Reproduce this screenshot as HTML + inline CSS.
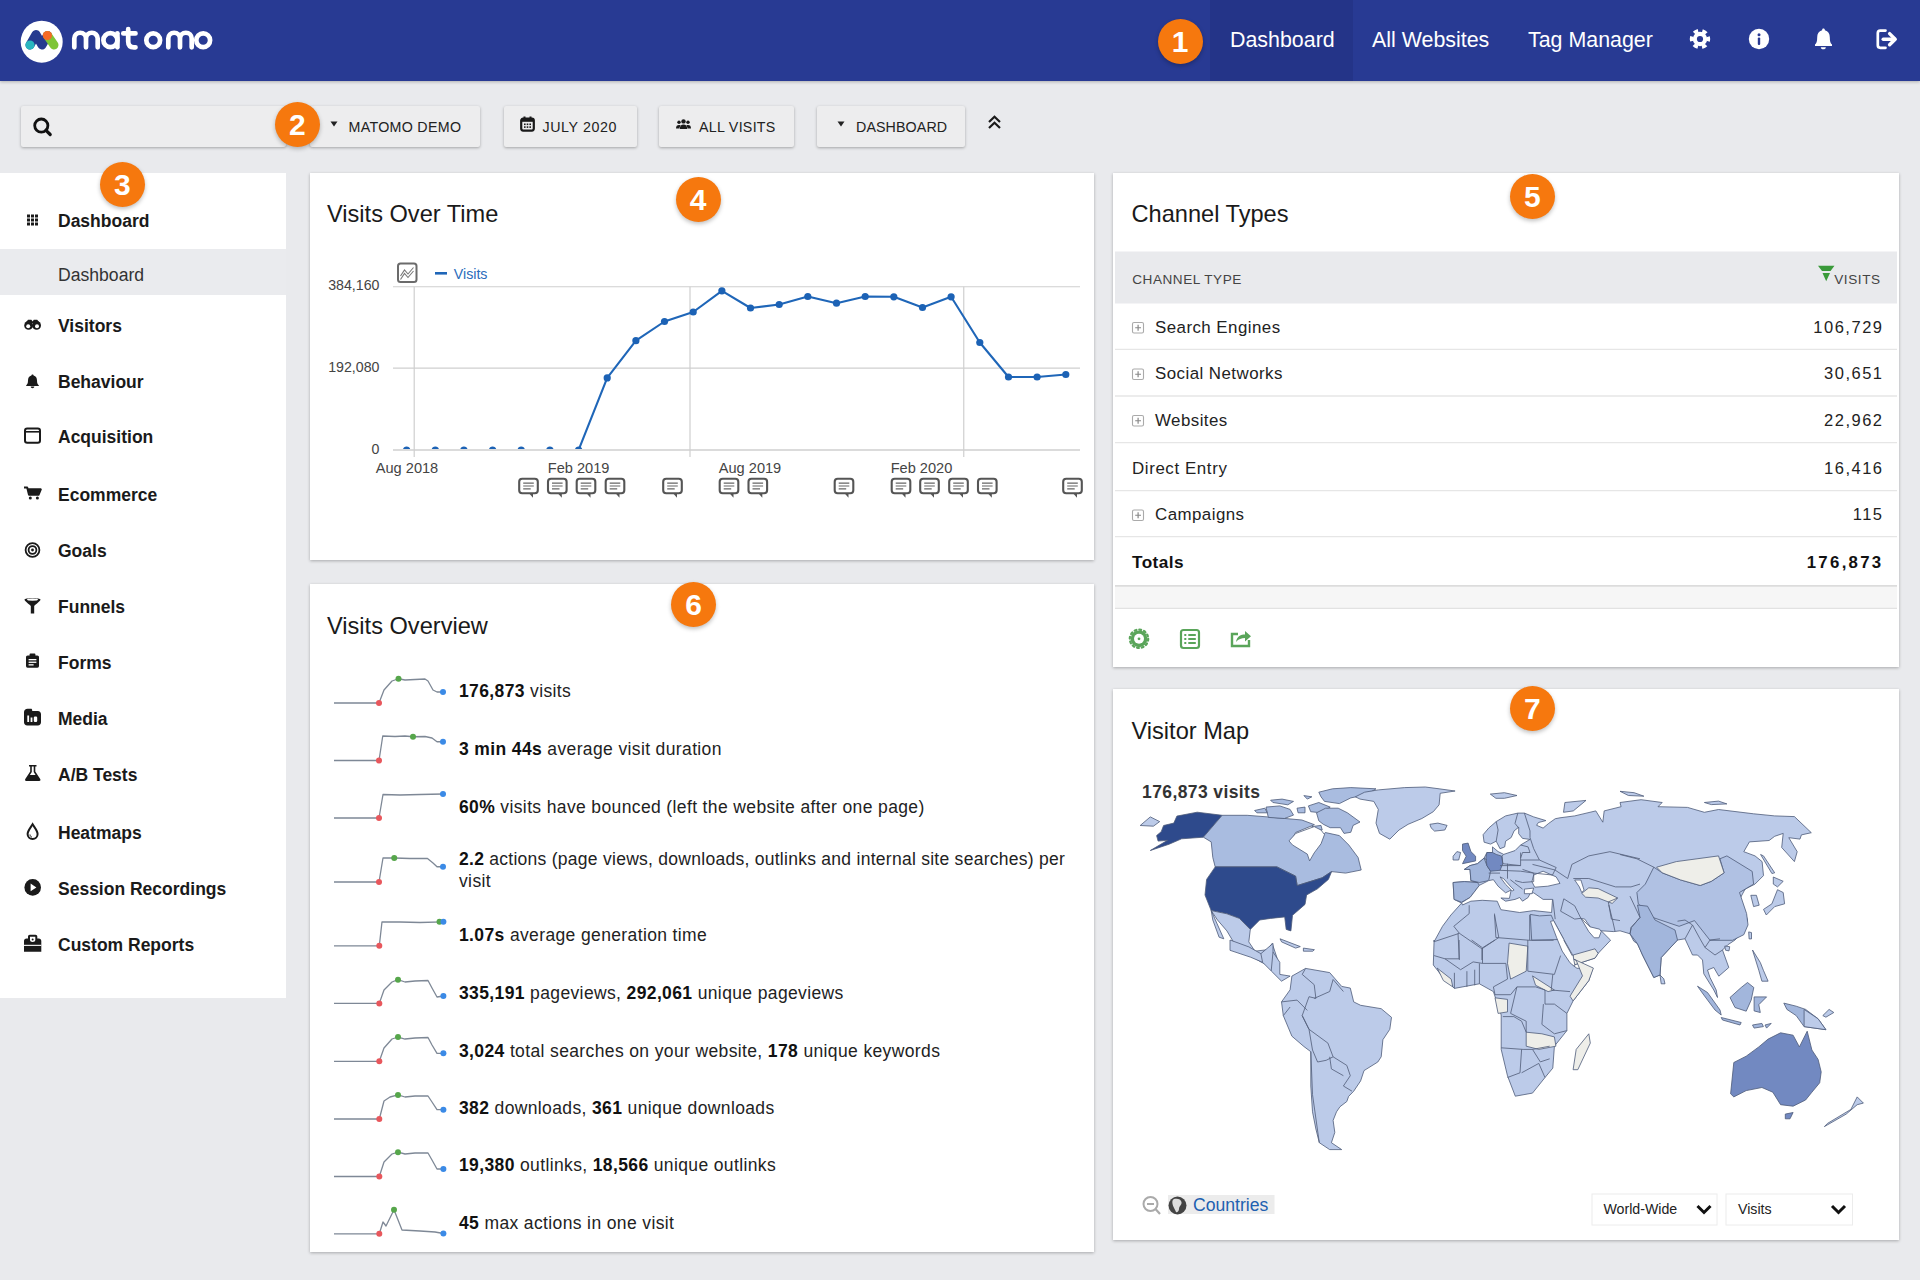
<!DOCTYPE html>
<html><head><meta charset="utf-8">
<style>
*{margin:0;padding:0;box-sizing:border-box}
html,body{width:1920px;height:1280px;overflow:hidden}
body{background:#e9eaed;font-family:"Liberation Sans",sans-serif;color:#222;position:relative}
.abs{position:absolute}
#hdr{position:absolute;left:0;top:0;width:1920px;height:81px;background:#283a93;box-shadow:0 1px 3px rgba(0,0,0,.25)}
.nav{position:absolute;top:0;height:81px;color:#fff;font-size:21px;line-height:81px;white-space:nowrap}
.badge{position:absolute;width:45px;height:45px;border-radius:50%;background:#f6780e;color:#fff;font-weight:bold;font-size:30px;line-height:46px;text-align:center;box-shadow:0 2px 4px rgba(0,0,0,.25)}
.tb{font-size:14.25px;letter-spacing:.6px}
.btn{position:absolute;top:106px;height:41px;background:#ededee;box-shadow:0 1px 3px rgba(0,0,0,.3);border-radius:2px;font-size:15px;letter-spacing:.6px;color:#222;line-height:41px;white-space:nowrap}
#side{position:absolute;left:0;top:173px;width:286px;height:825px;background:#fff}
.si{position:absolute;left:58px;font-size:17.5px;line-height:20px;font-weight:bold;color:#1a1a1a;white-space:nowrap}
.sic{position:absolute;left:24px;width:18px;height:18px}
.wd{position:absolute;background:#fff;box-shadow:0 1px 3px rgba(0,0,0,.28)}
.wt{position:absolute;left:17px;font-size:23px;color:#1a1a1a;white-space:nowrap}
</style></head><body>

<!-- HEADER -->
<div id="hdr">
  <svg class="abs" style="left:0;top:0" width="240" height="81" viewBox="0 0 240 81">
    <circle cx="41.7" cy="41.7" r="21" fill="#fff"/>
    <path d="M30 45 L36 34.5 L42 45 L47.5 35.5" fill="none" stroke="#253a8f" stroke-width="9" stroke-linecap="round" stroke-linejoin="round"/>
    <path d="M47.5 35.5 L54 45" fill="none" stroke="#7dc536" stroke-width="9" stroke-linecap="round"/>
    <circle cx="30" cy="45" r="4.6" fill="#2ab6bf"/>
    <circle cx="47.4" cy="35.6" r="4.6" fill="#f56a25"/>
    <g fill="none" stroke="#fff" stroke-width="4.7" stroke-linecap="round" stroke-linejoin="round">
      <path d="M74.3 47.3 V38.6 A5.85 5.85 0 0 1 86 38.6 V47.3 M86 38.6 A5.85 5.85 0 0 1 97.7 38.6 V47.3"/>
      <circle cx="110.4" cy="40.2" r="7"/><path d="M117.4 33.3 V47.3"/>
      <path d="M128.2 29.2 V41.5 C128.2 45.5 130 47.3 134 47.3 H135.5 M123.3 33.4 H135.5"/>
      <circle cx="153.2" cy="40.2" r="6.9"/>
      <path d="M168.3 47.3 V38.6 A5.85 5.85 0 0 1 180 38.6 V47.3 M180 38.6 A5.85 5.85 0 0 1 191.7 38.6 V47.3"/>
      <circle cx="203.2" cy="40.2" r="6.9"/>
    </g>
  </svg>
  <div class="nav" style="left:1210px;width:143px;background:#243488"></div>
  <div class="nav" style="left:1230px;font-size:21.4px">Dashboard</div>
  <div class="nav" style="left:1372px;font-size:21.4px">All Websites</div>
  <div class="nav" style="left:1528px;font-size:21.4px">Tag Manager</div>
  <!-- gear -->
  <svg class="abs" style="left:1689px;top:28px" width="22" height="22" viewBox="-11 -11 22 22">
    <circle r="8.4" fill="none" stroke="#fff" stroke-width="3.6" stroke-dasharray="4.6 4.2" transform="rotate(-16)"/>
    <circle r="7.2" fill="#fff"/>
    <circle r="3.1" fill="#293992"/>
  </svg>
  <!-- info -->
  <svg class="abs" style="left:1748px;top:28px" width="22" height="22" viewBox="-11 -11 22 22">
    <circle r="10.2" fill="#fff"/>
    <circle cx="0" cy="-4.3" r="1.5" fill="#293992"/>
    <rect x="-1.2" y="-1.5" width="2.4" height="7.6" rx="1" fill="#293992"/>
  </svg>
  <!-- bell -->
  <svg class="abs" style="left:1814px;top:27.5px" width="20" height="23" viewBox="0 0 20 23">
    <path d="M9.3 0.6 C10.4 0.6 10.9 1.3 10.9 2.2 C14.2 3 15.8 5.6 15.8 9.2 C15.8 13.4 16.5 15.3 18 16.6 V18 H1 V16.6 C2.5 15.3 3.2 13.4 3.2 9.2 C3.2 5.6 4.8 3 8.1 2.2 C8.1 1.3 8.6 0.6 9.3 0.6 Z" fill="#fff"/>
    <path d="M6.8 19.2 H11.8 C11.8 20.6 10.8 21.3 9.3 21.3 C7.8 21.3 6.8 20.6 6.8 19.2 Z" fill="#fff"/>
  </svg>
  <!-- logout -->
  <svg class="abs" style="left:1870px;top:24px" width="34" height="32" viewBox="1870 24 34 32">
    <path d="M1885.5 30.6 H1880.3 Q1877.8 30.6 1877.8 33.1 V45.3 Q1877.8 47.8 1880.3 47.8 H1885.5" fill="none" stroke="#fff" stroke-width="2.7" stroke-linecap="round"/>
    <path d="M1883.2 39.2 H1894.6" stroke="#fff" stroke-width="3.4" stroke-linecap="round"/>
    <path d="M1889.6 33.6 L1895.2 39.2 L1889.6 44.8" fill="none" stroke="#fff" stroke-width="3.4" stroke-linecap="round" stroke-linejoin="round"/>
  </svg>
</div>
<div class="badge" style="left:1157.5px;top:18.5px">1</div>

<!-- TOOLBAR -->
<div class="btn" style="left:21px;width:265px">
  <svg class="abs" style="left:11px;top:10px" width="22" height="22" viewBox="0 0 22 22">
    <circle cx="9.3" cy="9.6" r="6.6" fill="none" stroke="#111" stroke-width="2.8"/>
    <path d="M14 14.3 L18.2 18.5" stroke="#111" stroke-width="3.2" stroke-linecap="round"/>
  </svg>
</div>
<div class="btn" style="left:310px;width:170px">
  <svg class="abs" style="left:20px;top:15px" width="8" height="6" viewBox="0 0 8 6"><path d="M0.5 0.5 H7.5 L4 5.5 Z" fill="#222"/></svg>
  <span class="abs tb" style="left:38.5px;letter-spacing:.3px;top:.5px">MATOMO DEMO</span>
</div>
<div class="btn" style="left:504px;width:133px">
  <svg class="abs" style="left:16px;top:10px" width="15" height="16" viewBox="0 0 15 16">
    <rect x="1.2" y="2.6" width="12.6" height="12" rx="2" fill="none" stroke="#1a1a1a" stroke-width="2.2"/>
    <rect x="1.2" y="2.6" width="12.6" height="3.2" fill="#1a1a1a"/>
    <rect x="3.5" y="0.5" width="2" height="3" fill="#1a1a1a"/><rect x="9.5" y="0.5" width="2" height="3" fill="#1a1a1a"/>
    <g fill="#1a1a1a"><rect x="4" y="7.5" width="1.6" height="1.6"/><rect x="6.7" y="7.5" width="1.6" height="1.6"/><rect x="9.4" y="7.5" width="1.6" height="1.6"/><rect x="4" y="10.3" width="1.6" height="1.6"/><rect x="6.7" y="10.3" width="1.6" height="1.6"/><rect x="9.4" y="10.3" width="1.6" height="1.6"/></g>
  </svg>
  <span class="abs tb" style="left:38.5px;top:.5px">JULY 2020</span>
</div>
<div class="btn" style="left:659px;width:135px">
  <svg class="abs" style="left:17px;top:13px" width="15" height="11" viewBox="0 0 15 11">
    <g fill="#1a1a1a"><circle cx="7.5" cy="2.4" r="2.2"/><circle cx="3" cy="3.3" r="1.7"/><circle cx="12" cy="3.3" r="1.7"/>
    <path d="M3.8 10 C3.8 6.8 5.2 5.4 7.5 5.4 C9.8 5.4 11.2 6.8 11.2 10 Z"/><path d="M0 9.5 C0 6.8 1 5.9 3 5.9 C4 5.9 4.5 6.2 4.8 6.5 C3.9 7.3 3.5 8.4 3.5 9.5 Z"/><path d="M15 9.5 C15 6.8 14 5.9 12 5.9 C11 5.9 10.5 6.2 10.2 6.5 C11.1 7.3 11.5 8.4 11.5 9.5 Z"/></g>
  </svg>
  <span class="abs tb" style="left:40px;letter-spacing:.27px;top:.5px">ALL VISITS</span>
</div>
<div class="btn" style="left:817px;width:148px">
  <svg class="abs" style="left:20px;top:15px" width="8" height="6" viewBox="0 0 8 6"><path d="M0.5 0.5 H7.5 L4 5.5 Z" fill="#222"/></svg>
  <span class="abs tb" style="left:39px;letter-spacing:.1px;top:.5px">DASHBOARD</span>
</div>
<svg class="abs" style="left:987px;top:115px" width="15" height="15" viewBox="0 0 15 15">
  <path d="M2 7 L7.5 1.8 L13 7 M2 13 L7.5 7.8 L13 13" fill="none" stroke="#1a1a1a" stroke-width="2.2"/>
</svg>
<div class="badge" style="left:274.75px;top:101.5px">2</div>

<!-- SIDEBAR -->
<div id="side">
  <div class="abs" style="left:0;top:76px;width:286px;height:46px;background:#eaebee"></div>
  <div class="si" style="top:38px">Dashboard</div>
  <div class="si" style="top:91.5px;font-weight:normal;font-size:17.6px;color:#333">Dashboard</div>
  <div class="si" style="top:142.75px">Visitors</div>
  <div class="si" style="top:198.5px">Behaviour</div>
  <div class="si" style="top:254.25px">Acquisition</div>
  <div class="si" style="top:312.25px">Ecommerce</div>
  <div class="si" style="top:368px">Goals</div>
  <div class="si" style="top:424px">Funnels</div>
  <div class="si" style="top:479.75px">Forms</div>
  <div class="si" style="top:535.5px">Media</div>
  <div class="si" style="top:591.5px">A/B Tests</div>
  <div class="si" style="top:649.5px">Heatmaps</div>
  <div class="si" style="top:705.7px">Session Recordings</div>
  <div class="si" style="top:762px">Custom Reports</div>
  <svg class="abs" style="left:0;top:0" width="286" height="825" viewBox="0 173 286 825">
   <g fill="#1a1a1a" stroke="none">
    <rect x="27" y="214.5" width="3" height="3"/><rect x="27" y="218.5" width="3" height="3"/><rect x="27" y="222.5" width="3" height="3"/><rect x="31" y="214.5" width="3" height="3"/><rect x="31" y="218.5" width="3" height="3"/><rect x="31" y="222.5" width="3" height="3"/><rect x="35" y="214.5" width="3" height="3"/><rect x="35" y="218.5" width="3" height="3"/><rect x="35" y="222.5" width="3" height="3"/>
    <!-- binoculars -->
    <circle cx="28.6" cy="325.4" r="4.4"/>
    <circle cx="36.6" cy="325.4" r="4.4"/>
    <path d="M25.5 323 L28 319.8 H31.4 L32.6 321.5 L33.8 319.8 H37.2 L39.7 323 Z"/>
    <circle cx="28.2" cy="326.2" r="2" fill="#fff"/>
    <circle cx="37" cy="326.2" r="2" fill="#fff"/>
    <!-- bell -->
    <path d="M32.5 374.5 C33.2 374.5 33.6 375 33.6 375.6 C36 376.2 37 378 37 380.5 C37 383.2 37.6 384.4 38.8 385.3 V386 H26.2 V385.3 C27.4 384.4 28 383.2 28 380.5 C28 378 29 376.2 31.4 375.6 C31.4 375 31.8 374.5 32.5 374.5 Z"/>
    <path d="M30.7 386.6 H34.3 C34.3 387.6 33.5 388.2 32.5 388.2 C31.5 388.2 30.7 387.6 30.7 386.6 Z"/>
    <!-- window -->
    <rect x="25" y="428.5" width="15" height="14.2" rx="2.2" fill="none" stroke="#1a1a1a" stroke-width="2"/>
    <rect x="25" y="431" width="15" height="1.6"/>
    <!-- cart -->
    <path d="M24 487.5 H27.2 L29 494.8 H38.5 L40.8 489.3 H28.2" fill="none" stroke="#1a1a1a" stroke-width="2" stroke-linejoin="round"/>
    <path d="M28.4 489.6 H40.2 L38.2 494.4 H29.4 Z"/>
    <circle cx="30.3" cy="498" r="1.5"/><circle cx="37.4" cy="498" r="1.5"/>
    <!-- target -->
    <circle cx="32.5" cy="550" r="6.9" fill="none" stroke="#1a1a1a" stroke-width="1.8"/>
    <circle cx="32.5" cy="550" r="3.9" fill="none" stroke="#1a1a1a" stroke-width="1.8"/>
    <circle cx="32.5" cy="550" r="1.4"/>
    <!-- funnel -->
    <path d="M24.5 599.5 C24.5 597.8 40.5 597.8 40.5 599.5 C40.5 601 35.5 604.5 34.2 606 V613.5 H30.8 V606 C29.5 604.5 24.5 601 24.5 599.5 Z"/>
    <ellipse cx="32.5" cy="599.6" rx="5.6" ry="1.2" fill="#fff"/>
    <!-- clipboard -->
    <rect x="26" y="655.5" width="13" height="12.2" rx="1.6"/>
    <rect x="29.6" y="653.6" width="5.8" height="3.4" rx="0.8"/>
    <g fill="#fff"><rect x="28.6" y="659" width="7.8" height="1.3"/><rect x="28.6" y="661.6" width="7.8" height="1.3"/><rect x="28.6" y="664.2" width="5" height="1.3"/></g>
    <!-- media -->
    <path d="M27.5 708.8 H31 C31.8 708.8 32.2 709.5 32.2 710.3 V711 H37.8 C39.8 711 41 712.3 41 714.2 V722.3 C41 724.2 39.8 725.5 37.8 725.5 H27.3 C25.3 725.5 24 724.2 24 722.3 V712 C24 710.2 25.5 708.8 27.5 708.8 Z"/>
    <g fill="#fff"><rect x="27.3" y="715.5" width="1.8" height="6.5"/><rect x="30.6" y="717.5" width="1.8" height="4.5"/><rect x="33.8" y="716.5" width="3.4" height="5.5" rx="1.2"/></g>
    <!-- flask -->
    <path d="M29 765 H36.5 V766.6 H35.3 V771.5 L40.2 779 C40.8 780 40.3 781 39.2 781 H26.3 C25.2 781 24.7 780 25.3 779 L30.2 771.5 V766.6 H29 Z"/>
    <path d="M31.8 766.6 H33.7 V772 L35.6 775 H29.9 L31.8 772 Z" fill="#fff"/>
    <!-- drop -->
    <path d="M32.6 824.3 C34.5 827.5 37.6 831 37.6 834 C37.6 837 35.4 839 32.6 839 C29.8 839 27.6 837 27.6 834 C27.6 831 30.7 827.5 32.6 824.3 Z" fill="none" stroke="#1a1a1a" stroke-width="2"/>
    <path d="M30 834.5 C30 836 31 837 32 837" fill="none" stroke="#1a1a1a" stroke-width="1"/>
    <!-- play -->
    <circle cx="32.7" cy="887.4" r="8.3"/>
    <path d="M30.6 883.6 L36.4 887.4 L30.6 891.2 Z" fill="#fff"/>
    <!-- custom reports -->
    <path d="M24 941 C24 939.5 25 938.6 26.5 938.6 H28 V936.5 C28 935.4 28.8 934.7 29.8 934.7 H35.5 C36.5 934.7 37.3 935.4 37.3 936.5 V938.6 H38.8 C40.3 938.6 41.3 939.5 41.3 941 V951.7 H24 Z"/>
    <g fill="#fff"><path d="M30 936.8 H35.3 V939.8 C35.3 941.2 34.2 942 32.65 942 C31.1 942 30 941.2 30 939.8 Z"/><rect x="24" y="944.8" width="17.3" height="1.1"/></g>
    <circle cx="32.65" cy="939.4" r="1" fill="#1a1a1a"/>
   </g>
  </svg>
</div>
<div class="badge" style="left:99.75px;top:162px">3</div>

<!-- WIDGETS -->
<div class="wd" style="left:310px;top:173px;width:784px;height:387px"></div>
<div class="wd" style="left:310px;top:584px;width:784px;height:668px"></div>
<div class="wd" style="left:1113px;top:173px;width:786px;height:494px"></div>
<div class="wd" style="left:1113px;top:689px;width:786px;height:551px"></div>
<svg class="abs" style="left:0;top:0" width="1920" height="1280" viewBox="0 0 1920 1280" font-family="Liberation Sans">
<text x="327" y="222.3" font-size="23.6" fill="#1a1a1a" font-weight="normal" text-anchor="start">Visits Over Time</text>
<text x="327" y="633.5" font-size="23.6" fill="#1a1a1a" font-weight="normal" text-anchor="start">Visits Overview</text>
<text x="1131.5" y="222.3" font-size="23.6" fill="#1a1a1a" font-weight="normal" text-anchor="start">Channel Types</text>
<text x="1131.5" y="739" font-size="23.6" fill="#1a1a1a" font-weight="normal" text-anchor="start">Visitor Map</text>
<line x1="393" y1="286.75" x2="1080" y2="286.75" stroke="#cfcfcf" stroke-width="1.2"/>
<line x1="393" y1="368.2" x2="1080" y2="368.2" stroke="#cfcfcf" stroke-width="1.2"/>
<line x1="393" y1="450" x2="1080" y2="450" stroke="#cfcfcf" stroke-width="1.2"/>
<line x1="414.2" y1="286.75" x2="414.2" y2="457" stroke="#cfcfcf" stroke-width="1.2"/>
<line x1="690" y1="286.75" x2="690" y2="457" stroke="#cfcfcf" stroke-width="1.2"/>
<line x1="963.75" y1="286.75" x2="963.75" y2="457" stroke="#cfcfcf" stroke-width="1.2"/>
<text x="379.5" y="289.7" font-size="14.2" fill="#444" font-weight="normal" text-anchor="end">384,160</text>
<text x="379.5" y="371.7" font-size="14.2" fill="#444" font-weight="normal" text-anchor="end">192,080</text>
<text x="379.5" y="454.2" font-size="14.2" fill="#444" font-weight="normal" text-anchor="end">0</text>
<text x="407" y="472.8" font-size="14.6" fill="#444" font-weight="normal" text-anchor="middle">Aug 2018</text>
<text x="578.6" y="472.8" font-size="14.6" fill="#444" font-weight="normal" text-anchor="middle">Feb 2019</text>
<text x="750" y="472.8" font-size="14.6" fill="#444" font-weight="normal" text-anchor="middle">Aug 2019</text>
<text x="921.5" y="472.8" font-size="14.6" fill="#444" font-weight="normal" text-anchor="middle">Feb 2020</text>
<clipPath id="plotclip"><rect x="393" y="250" width="700" height="199"/></clipPath>
<g clip-path="url(#plotclip)">
<polyline points="406.6,450.0 435.3,450.0 463.9,450.0 492.6,450.0 521.2,450.0 549.9,450.0 578.6,450.0 607.2,377.9 635.9,340.7 664.5,321.5 693.2,312.0 721.9,290.8 750.5,308.0 779.2,304.5 807.8,296.5 836.5,303.2 865.2,296.5 893.8,296.8 922.5,307.5 951.1,296.8 979.8,342.5 1008.5,377.0 1037.1,377.0 1065.8,374.5" fill="none" stroke="#1f66b8" stroke-width="2.1" stroke-linejoin="round"/>
<circle cx="406.6" cy="450.0" r="3.6" fill="#1c62b5"/>
<circle cx="435.3" cy="450.0" r="3.6" fill="#1c62b5"/>
<circle cx="463.9" cy="450.0" r="3.6" fill="#1c62b5"/>
<circle cx="492.6" cy="450.0" r="3.6" fill="#1c62b5"/>
<circle cx="521.2" cy="450.0" r="3.6" fill="#1c62b5"/>
<circle cx="549.9" cy="450.0" r="3.6" fill="#1c62b5"/>
<circle cx="578.6" cy="450.0" r="3.6" fill="#1c62b5"/>
<circle cx="607.2" cy="377.9" r="3.6" fill="#1c62b5"/>
<circle cx="635.9" cy="340.7" r="3.6" fill="#1c62b5"/>
<circle cx="664.5" cy="321.5" r="3.6" fill="#1c62b5"/>
<circle cx="693.2" cy="312.0" r="3.6" fill="#1c62b5"/>
<circle cx="721.9" cy="290.8" r="3.6" fill="#1c62b5"/>
<circle cx="750.5" cy="308.0" r="3.6" fill="#1c62b5"/>
<circle cx="779.2" cy="304.5" r="3.6" fill="#1c62b5"/>
<circle cx="807.8" cy="296.5" r="3.6" fill="#1c62b5"/>
<circle cx="836.5" cy="303.2" r="3.6" fill="#1c62b5"/>
<circle cx="865.2" cy="296.5" r="3.6" fill="#1c62b5"/>
<circle cx="893.8" cy="296.8" r="3.6" fill="#1c62b5"/>
<circle cx="922.5" cy="307.5" r="3.6" fill="#1c62b5"/>
<circle cx="951.1" cy="296.8" r="3.6" fill="#1c62b5"/>
<circle cx="979.8" cy="342.5" r="3.6" fill="#1c62b5"/>
<circle cx="1008.5" cy="377.0" r="3.6" fill="#1c62b5"/>
<circle cx="1037.1" cy="377.0" r="3.6" fill="#1c62b5"/>
<circle cx="1065.8" cy="374.5" r="3.6" fill="#1c62b5"/>
</g>
<line x1="393" y1="450" x2="1080" y2="450" stroke="#cfcfcf" stroke-width="1.2"/>
<rect x="398" y="263.4" width="18.5" height="18.5" rx="2.5" fill="none" stroke="#6b6b6b" stroke-width="2"/>
<path d="M400.5 276 L404.5 270 L408 274 L413.5 267.5 M400.5 279.5 L404.5 273.5 L408 277.5 L413.5 271" fill="none" stroke="#777" stroke-width="1.1"/>
<line x1="435" y1="273.3" x2="447" y2="273.3" stroke="#1f66b8" stroke-width="2.6"/>
<text x="453.8" y="279.2" font-size="14.2" fill="#2a6cbb" font-weight="normal" text-anchor="start">Visits</text>
<rect x="519.2" y="478.8" width="18.6" height="14.4" rx="3" fill="#fff" stroke="#555" stroke-width="2.1"/>
<path d="M529.0 493.2 L533.0 497.8 L533.0 493.2 Z" fill="#555"/>
<path d="M523.2 483.1 H533.8 M523.2 486.0 H533.8 M523.2 488.90000000000003 H530.7" stroke="#666" stroke-width="1.2"/>
<rect x="548.0" y="478.8" width="18.6" height="14.4" rx="3" fill="#fff" stroke="#555" stroke-width="2.1"/>
<path d="M557.8 493.2 L561.8 497.8 L561.8 493.2 Z" fill="#555"/>
<path d="M552.0 483.1 H562.6 M552.0 486.0 H562.6 M552.0 488.90000000000003 H559.5" stroke="#666" stroke-width="1.2"/>
<rect x="576.7" y="478.8" width="18.6" height="14.4" rx="3" fill="#fff" stroke="#555" stroke-width="2.1"/>
<path d="M586.5 493.2 L590.5 497.8 L590.5 493.2 Z" fill="#555"/>
<path d="M580.7 483.1 H591.3 M580.7 486.0 H591.3 M580.7 488.90000000000003 H588.2" stroke="#666" stroke-width="1.2"/>
<rect x="605.7" y="478.8" width="18.6" height="14.4" rx="3" fill="#fff" stroke="#555" stroke-width="2.1"/>
<path d="M615.5 493.2 L619.5 497.8 L619.5 493.2 Z" fill="#555"/>
<path d="M609.7 483.1 H620.3 M609.7 486.0 H620.3 M609.7 488.90000000000003 H617.2" stroke="#666" stroke-width="1.2"/>
<rect x="663.2" y="478.8" width="18.6" height="14.4" rx="3" fill="#fff" stroke="#555" stroke-width="2.1"/>
<path d="M673.0 493.2 L677.0 497.8 L677.0 493.2 Z" fill="#555"/>
<path d="M667.2 483.1 H677.8 M667.2 486.0 H677.8 M667.2 488.90000000000003 H674.7" stroke="#666" stroke-width="1.2"/>
<rect x="719.7" y="478.8" width="18.6" height="14.4" rx="3" fill="#fff" stroke="#555" stroke-width="2.1"/>
<path d="M729.5 493.2 L733.5 497.8 L733.5 493.2 Z" fill="#555"/>
<path d="M723.7 483.1 H734.3 M723.7 486.0 H734.3 M723.7 488.90000000000003 H731.2" stroke="#666" stroke-width="1.2"/>
<rect x="748.5" y="478.8" width="18.6" height="14.4" rx="3" fill="#fff" stroke="#555" stroke-width="2.1"/>
<path d="M758.3 493.2 L762.3 497.8 L762.3 493.2 Z" fill="#555"/>
<path d="M752.5 483.1 H763.1 M752.5 486.0 H763.1 M752.5 488.90000000000003 H760.0" stroke="#666" stroke-width="1.2"/>
<rect x="834.7" y="478.8" width="18.6" height="14.4" rx="3" fill="#fff" stroke="#555" stroke-width="2.1"/>
<path d="M844.5 493.2 L848.5 497.8 L848.5 493.2 Z" fill="#555"/>
<path d="M838.7 483.1 H849.3 M838.7 486.0 H849.3 M838.7 488.90000000000003 H846.2" stroke="#666" stroke-width="1.2"/>
<rect x="891.7" y="478.8" width="18.6" height="14.4" rx="3" fill="#fff" stroke="#555" stroke-width="2.1"/>
<path d="M901.5 493.2 L905.5 497.8 L905.5 493.2 Z" fill="#555"/>
<path d="M895.7 483.1 H906.3 M895.7 486.0 H906.3 M895.7 488.90000000000003 H903.2" stroke="#666" stroke-width="1.2"/>
<rect x="920.2" y="478.8" width="18.6" height="14.4" rx="3" fill="#fff" stroke="#555" stroke-width="2.1"/>
<path d="M930.0 493.2 L934.0 497.8 L934.0 493.2 Z" fill="#555"/>
<path d="M924.2 483.1 H934.8 M924.2 486.0 H934.8 M924.2 488.90000000000003 H931.7" stroke="#666" stroke-width="1.2"/>
<rect x="949.2" y="478.8" width="18.6" height="14.4" rx="3" fill="#fff" stroke="#555" stroke-width="2.1"/>
<path d="M959.0 493.2 L963.0 497.8 L963.0 493.2 Z" fill="#555"/>
<path d="M953.2 483.1 H963.8 M953.2 486.0 H963.8 M953.2 488.90000000000003 H960.7" stroke="#666" stroke-width="1.2"/>
<rect x="978.0" y="478.8" width="18.6" height="14.4" rx="3" fill="#fff" stroke="#555" stroke-width="2.1"/>
<path d="M987.8 493.2 L991.8 497.8 L991.8 493.2 Z" fill="#555"/>
<path d="M982.0 483.1 H992.6 M982.0 486.0 H992.6 M982.0 488.90000000000003 H989.5" stroke="#666" stroke-width="1.2"/>
<rect x="1063.2" y="478.8" width="18.6" height="14.4" rx="3" fill="#fff" stroke="#555" stroke-width="2.1"/>
<path d="M1073.0 493.2 L1077.0 497.8 L1077.0 493.2 Z" fill="#555"/>
<path d="M1067.2 483.1 H1077.8 M1067.2 486.0 H1077.8 M1067.2 488.90000000000003 H1074.7" stroke="#666" stroke-width="1.2"/>
<text x="459" y="697" font-size="17.5" letter-spacing="0.37" xml:space="preserve"><tspan font-weight="bold" fill="#111">176,873</tspan><tspan font-weight="normal" fill="#222"> visits</tspan></text>
<polyline points="334,703 379,703 384,690 392,681 398.5,678.75 405,680 415,679.5 425,679 428,681 433,690 437,692 443,692" fill="none" stroke="#7e8896" stroke-width="1.3" stroke-linejoin="round"/>
<circle cx="379" cy="703" r="3" fill="#e8575c"/>
<circle cx="398.5" cy="678.75" r="3" fill="#56a64b"/>
<circle cx="443" cy="692" r="3" fill="#3b8ae6"/>
<text x="459" y="755" font-size="17.5" letter-spacing="0.37" xml:space="preserve"><tspan font-weight="bold" fill="#111">3 min 44s</tspan><tspan font-weight="normal" fill="#222"> average visit duration</tspan></text>
<polyline points="334,760.5 379,760.5 382.75,736 395,736.5 405,736 413,736.75 425,736.5 432,738 437,741.75 443,741.75" fill="none" stroke="#7e8896" stroke-width="1.3" stroke-linejoin="round"/>
<circle cx="379" cy="760.5" r="3" fill="#e8575c"/>
<circle cx="413" cy="736.75" r="3" fill="#56a64b"/>
<circle cx="443" cy="741.75" r="3" fill="#3b8ae6"/>
<text x="459" y="812.5" font-size="17.5" letter-spacing="0.37" xml:space="preserve"><tspan font-weight="bold" fill="#111">60%</tspan><tspan font-weight="normal" fill="#222"> visits have bounced (left the website after one page)</tspan></text>
<polyline points="334,818 379,818 383,794.5 400,795 420,794.5 443,794" fill="none" stroke="#7e8896" stroke-width="1.3" stroke-linejoin="round"/>
<circle cx="379" cy="818" r="3" fill="#e8575c"/>
<circle cx="443" cy="794" r="3" fill="#3b8ae6"/>
<text x="459" y="865" font-size="17.5" letter-spacing="0.27" xml:space="preserve"><tspan font-weight="bold" fill="#111">2.2</tspan><tspan font-weight="normal" fill="#222"> actions (page views, downloads, outlinks and internal site searches) per</tspan></text>
<polyline points="334,882 379,882 383,858 394.25,858 410,858.5 427.5,858.5 433,863 437,866.75 443,866.75" fill="none" stroke="#7e8896" stroke-width="1.3" stroke-linejoin="round"/>
<circle cx="379" cy="882" r="3" fill="#e8575c"/>
<circle cx="394.25" cy="858" r="3" fill="#56a64b"/>
<circle cx="443" cy="866.75" r="3" fill="#3b8ae6"/>
<text x="459" y="941" font-size="17.5" letter-spacing="0.37" xml:space="preserve"><tspan font-weight="bold" fill="#111">1.07s</tspan><tspan font-weight="normal" fill="#222"> average generation time</tspan></text>
<polyline points="334,945.8 379.3,945.8 382,921.8 400,922 420,922.5 443.4,921.8" fill="none" stroke="#7e8896" stroke-width="1.3" stroke-linejoin="round"/>
<circle cx="379.3" cy="945.8" r="3" fill="#e8575c"/>
<circle cx="439.5" cy="921.8" r="3" fill="#56a64b"/>
<circle cx="443.4" cy="921.8" r="3" fill="#3b8ae6"/>
<text x="459" y="999" font-size="17.5" letter-spacing="0.37" xml:space="preserve"><tspan font-weight="bold" fill="#111">335,191</tspan><tspan font-weight="normal" fill="#222"> pageviews, </tspan><tspan font-weight="bold" fill="#111">292,061</tspan><tspan font-weight="normal" fill="#222"> unique pageviews</tspan></text>
<polyline points="334,1003.4 379.3,1003.4 384,990 392,982 398,979.7 405,982 415,981 428,980.5 432,988 437,997 443.4,996" fill="none" stroke="#7e8896" stroke-width="1.3" stroke-linejoin="round"/>
<circle cx="379.3" cy="1003.4" r="3" fill="#e8575c"/>
<circle cx="398" cy="979.7" r="3" fill="#56a64b"/>
<circle cx="443.4" cy="996" r="3" fill="#3b8ae6"/>
<text x="459" y="1056.7" font-size="17.5" letter-spacing="0.37" xml:space="preserve"><tspan font-weight="bold" fill="#111">3,024</tspan><tspan font-weight="normal" fill="#222"> total searches on your website, </tspan><tspan font-weight="bold" fill="#111">178</tspan><tspan font-weight="normal" fill="#222"> unique keywords</tspan></text>
<polyline points="334,1061.3 379.3,1061.3 384,1048 392,1039 398,1037 405,1039 415,1038 428,1037.5 432,1045 437,1053.3 443.4,1053.3" fill="none" stroke="#7e8896" stroke-width="1.3" stroke-linejoin="round"/>
<circle cx="379.3" cy="1061.3" r="3" fill="#e8575c"/>
<circle cx="398" cy="1037" r="3" fill="#56a64b"/>
<circle cx="443.4" cy="1053.3" r="3" fill="#3b8ae6"/>
<text x="459" y="1114" font-size="17.5" letter-spacing="0.37" xml:space="preserve"><tspan font-weight="bold" fill="#111">382</tspan><tspan font-weight="normal" fill="#222"> downloads, </tspan><tspan font-weight="bold" fill="#111">361</tspan><tspan font-weight="normal" fill="#222"> unique downloads</tspan></text>
<polyline points="334,1119 379.3,1119 384,1101 390,1097 398,1094.9 405,1097 415,1096 428,1096 432,1102 437,1109.7 443.4,1109.7" fill="none" stroke="#7e8896" stroke-width="1.3" stroke-linejoin="round"/>
<circle cx="379.3" cy="1119" r="3" fill="#e8575c"/>
<circle cx="398" cy="1094.9" r="3" fill="#56a64b"/>
<circle cx="443.4" cy="1109.7" r="3" fill="#3b8ae6"/>
<text x="459" y="1171" font-size="17.5" letter-spacing="0.37" xml:space="preserve"><tspan font-weight="bold" fill="#111">19,380</tspan><tspan font-weight="normal" fill="#222"> outlinks, </tspan><tspan font-weight="bold" fill="#111">18,566</tspan><tspan font-weight="normal" fill="#222"> unique outlinks</tspan></text>
<polyline points="334,1176.5 379.3,1176.5 384,1162 392,1154 398,1152.2 405,1154 415,1153 428,1153 432,1160 437,1169 443.4,1169" fill="none" stroke="#7e8896" stroke-width="1.3" stroke-linejoin="round"/>
<circle cx="379.3" cy="1176.5" r="3" fill="#e8575c"/>
<circle cx="398" cy="1152.2" r="3" fill="#56a64b"/>
<circle cx="443.4" cy="1169" r="3" fill="#3b8ae6"/>
<text x="459" y="1228.6" font-size="17.5" letter-spacing="0.37" xml:space="preserve"><tspan font-weight="bold" fill="#111">45</tspan><tspan font-weight="normal" fill="#222"> max actions in one visit</tspan></text>
<polyline points="334,1233.8 379.3,1233.8 383,1222 386,1226 394,1209.8 402,1230 420,1231 435,1232 443.4,1233.5" fill="none" stroke="#7e8896" stroke-width="1.3" stroke-linejoin="round"/>
<circle cx="379.3" cy="1233.8" r="3" fill="#e8575c"/>
<circle cx="394" cy="1209.8" r="3" fill="#56a64b"/>
<circle cx="443.4" cy="1233.5" r="3" fill="#3b8ae6"/>
<text x="459" y="886.5" font-size="17.5" fill="#222" font-weight="normal" text-anchor="start" letter-spacing="0.37">visit</text>
<rect x="1115" y="251.5" width="782" height="52" fill="#e9eaed"/>
<text x="1132.3" y="283.5" font-size="13.6" fill="#444" font-weight="normal" text-anchor="start" letter-spacing="0.5">CHANNEL TYPE</text>
<text x="1880.8" y="283.5" font-size="13.6" fill="#444" font-weight="normal" text-anchor="end" letter-spacing="0.6">VISITS</text>
<path d="M1818 265.7 H1834.5 L1830.5 271 H1822 Z M1822.5 273 H1830 L1826.2 281.3 Z" fill="#3a9a3a"/>
<text x="1155" y="332.5" font-size="16.9" fill="#222" font-weight="normal" text-anchor="start" letter-spacing="0.45">Search Engines</text>
<rect x="1132.5" y="322.5" width="11" height="10.5" rx="1.5" fill="none" stroke="#aaa" stroke-width="1.1"/>
<path d="M1135.2 327.75 H1141 M1138.1 324.7 V330.7" stroke="#888" stroke-width="1.2"/>
<text x="1883.5" y="332.5" font-size="16.5" fill="#222" font-weight="normal" text-anchor="end" letter-spacing="1.5">106,729</text>
<text x="1155" y="379" font-size="16.9" fill="#222" font-weight="normal" text-anchor="start" letter-spacing="0.45">Social Networks</text>
<rect x="1132.5" y="369" width="11" height="10.5" rx="1.5" fill="none" stroke="#aaa" stroke-width="1.1"/>
<path d="M1135.2 374.25 H1141 M1138.1 371.2 V377.2" stroke="#888" stroke-width="1.2"/>
<text x="1883.5" y="379" font-size="16.5" fill="#222" font-weight="normal" text-anchor="end" letter-spacing="1.5">30,651</text>
<text x="1155" y="425.5" font-size="16.9" fill="#222" font-weight="normal" text-anchor="start" letter-spacing="0.45">Websites</text>
<rect x="1132.5" y="415.5" width="11" height="10.5" rx="1.5" fill="none" stroke="#aaa" stroke-width="1.1"/>
<path d="M1135.2 420.75 H1141 M1138.1 417.7 V423.7" stroke="#888" stroke-width="1.2"/>
<text x="1883.5" y="425.5" font-size="16.5" fill="#222" font-weight="normal" text-anchor="end" letter-spacing="1.5">22,962</text>
<text x="1132" y="473.8" font-size="16.9" fill="#222" font-weight="normal" text-anchor="start" letter-spacing="0.6">Direct Entry</text>
<text x="1883.5" y="473.8" font-size="16.5" fill="#222" font-weight="normal" text-anchor="end" letter-spacing="1.5">16,416</text>
<text x="1155" y="520" font-size="16.9" fill="#222" font-weight="normal" text-anchor="start" letter-spacing="0.45">Campaigns</text>
<rect x="1132.5" y="510" width="11" height="10.5" rx="1.5" fill="none" stroke="#aaa" stroke-width="1.1"/>
<path d="M1135.2 515.25 H1141 M1138.1 512.2 V518.2" stroke="#888" stroke-width="1.2"/>
<text x="1883.5" y="520" font-size="16.5" fill="#222" font-weight="normal" text-anchor="end" letter-spacing="1.5">115</text>
<line x1="1115" y1="349.4" x2="1897" y2="349.4" stroke="#e6e6e6" stroke-width="1.3"/>
<line x1="1115" y1="396" x2="1897" y2="396" stroke="#e6e6e6" stroke-width="1.3"/>
<line x1="1115" y1="442.7" x2="1897" y2="442.7" stroke="#e6e6e6" stroke-width="1.3"/>
<line x1="1115" y1="490.6" x2="1897" y2="490.6" stroke="#e6e6e6" stroke-width="1.3"/>
<line x1="1115" y1="536.6" x2="1897" y2="536.6" stroke="#e6e6e6" stroke-width="1.3"/>
<text x="1132" y="568.2" font-size="17.2" fill="#111" font-weight="bold" text-anchor="start" letter-spacing="0.45">Totals</text>
<text x="1883.5" y="568.2" font-size="16.8" fill="#111" font-weight="bold" text-anchor="end" letter-spacing="2.3">176,873</text>
<rect x="1115" y="585" width="782" height="23.5" fill="#f6f6f6"/>
<line x1="1115" y1="585.8" x2="1897" y2="585.8" stroke="#dcdcdc" stroke-width="1.8"/>
<line x1="1115" y1="608.3" x2="1897" y2="608.3" stroke="#e2e2e2" stroke-width="1.2"/>
<g transform="translate(1139,638.8)"><circle r="9.2" fill="none" stroke="#5aa55a" stroke-width="2.2" stroke-dasharray="1.9 2.92" stroke-linecap="round"/><circle r="8.4" fill="#5aa55a"/><circle r="5" fill="#fff"/><circle r="1.4" fill="#5aa55a"/></g>
<rect x="1181" y="630" width="18" height="18" rx="2.5" fill="none" stroke="#5aa55a" stroke-width="2.2"/>
<path d="M1184.3 635 h2 M1184.3 639 h2 M1184.3 643 h2 M1188.3 635 h7.5 M1188.3 639 h7.5 M1188.3 643 h7.5" stroke="#5aa55a" stroke-width="2"/>
<path d="M1238 634 H1232 V646 H1249 V640" fill="none" stroke="#5aa55a" stroke-width="2.4"/>
<path d="M1236 642 C1237 636 1241 634.5 1245 634.5 V631 L1251 636.2 L1245 641.5 V638 C1241.5 638 1238.5 639 1236 642 Z" fill="#5aa55a"/>
<text x="1142" y="798.2" font-size="17.5" fill="#333" font-weight="bold" text-anchor="start" letter-spacing="0.4">176,873 visits</text>
<g><polygon points="1140.2,825.5 1150.3,816.9 1159.7,821.6 1153.4,826.2" fill="#bccbe9" stroke="#4d5b78" stroke-width="0.8"/>
<polygon points="1150.3,850.5 1169.1,844.2 1181.6,838.8 1203.4,837.2 1222.2,815.3 1197.2,812.2 1176.9,816.1 1173.8,823.1 1163.6,825.5 1161.2,831.7 1156.6,835.6 1158.1,841.1 1167.5,840.3" fill="#2e4a8c" stroke="#4d5b78" stroke-width="0.8"/>
<polygon points="1222.2,815.3 1203.4,837.2 1211.2,841.9 1212.8,857.5 1215.2,866.9 1276.9,866.9 1295.6,876.2 1297.2,885.6 1322.2,877.8 1331.6,871.6 1345.6,873.1 1361.2,870.0 1358.1,857.5 1348.8,845.0 1339.4,835.6 1325.3,832.5 1311.2,854.4 1306.6,843.4 1290.9,841.9 1295.6,832.5 1314.4,824.7 1301.9,820.0 1267.5,816.9 1247.2,815.3" fill="#a9bce0" stroke="#4d5b78" stroke-width="0.8"/>
<polygon points="1215.2,866.9 1276.9,866.9 1295.6,876.2 1297.2,885.6 1322.2,877.8 1331.6,871.6 1328.4,879.4 1317.5,888.8 1306.6,895.0 1305.0,904.4 1292.5,915.3 1290.9,930.9 1286.2,929.4 1284.7,916.9 1270.6,918.4 1259.7,920.0 1250.3,929.4 1239.4,918.4 1226.9,913.8 1211.2,910.6 1205.0,895.0 1206.6,879.4" fill="#2e4a8c" stroke="#4d5b78" stroke-width="0.8"/>
<polygon points="1266.0,807.1 1279.8,805.9 1290.1,809.4 1293.5,815.1 1284.4,818.5 1268.3,817.4" fill="#a9bce0" stroke="#4d5b78" stroke-width="0.8"/>
<polygon points="1254.6,810.5 1264.9,808.2 1267.2,812.8 1256.9,812.8" fill="#a9bce0" stroke="#4d5b78" stroke-width="0.8"/>
<polygon points="1270.6,800.2 1282.1,799.1 1293.5,801.4 1287.8,804.8 1272.9,802.5" fill="#a9bce0" stroke="#4d5b78" stroke-width="0.8"/>
<polygon points="1297.0,808.2 1305.0,807.1 1305.0,812.8 1298.1,812.8" fill="#a9bce0" stroke="#4d5b78" stroke-width="0.8"/>
<polygon points="1303.9,795.6 1311.9,796.8 1307.3,799.1" fill="#a9bce0" stroke="#4d5b78" stroke-width="0.8"/>
<polygon points="1318.8,792.2 1332.5,788.8 1350.8,787.6 1376.0,788.8 1366.9,794.5 1350.8,797.9 1339.4,803.6 1324.5,801.4 1321.0,796.8" fill="#a9bce0" stroke="#4d5b78" stroke-width="0.8"/>
<polygon points="1308.4,805.9 1318.8,802.5 1330.2,807.1 1321.0,812.8 1310.7,811.7" fill="#a9bce0" stroke="#4d5b78" stroke-width="0.8"/>
<polygon points="1316.5,812.8 1325.6,808.2 1338.2,808.2 1347.4,812.8 1360.0,822.0 1353.1,825.4 1350.8,832.3 1344.0,833.4 1340.5,827.7 1330.2,827.7 1323.3,824.3 1318.8,820.8" fill="#a9bce0" stroke="#4d5b78" stroke-width="0.8"/>
<polygon points="1311.9,826.6 1321.0,825.4 1322.2,830.0 1314.2,830.0" fill="#a9bce0" stroke="#4d5b78" stroke-width="0.8"/>
<polygon points="1289.0,840.9 1295.8,833.4 1305.0,830.0 1314.2,826.6 1321.0,830.0 1324.5,834.6 1321.0,843.8 1314.2,852.9 1309.6,860.9 1307.3,854.1 1292.4,844.9" fill="#ffffff" stroke="#4d5b78" stroke-width="0.8"/>
<polygon points="1211.2,910.6 1226.9,913.8 1239.4,918.4 1250.3,929.4 1248.8,941.9 1255.0,951.2 1267.5,949.7 1272.2,943.4 1276.9,957.5 1278.4,970.0 1261.2,962.2 1248.8,954.4 1236.2,946.6 1226.9,930.9 1217.5,920.0" fill="#bccbe9" stroke="#4d5b78" stroke-width="0.8"/>
<polygon points="1211.2,910.6 1223.8,938.8 1219.1,937.2 1212.8,920.0" fill="#bccbe9" stroke="#4d5b78" stroke-width="0.8"/>
<polygon points="1230.0,940.0 1248.9,946.9 1260.9,953.7 1273.0,943.4 1273.0,952.0 1279.8,962.3 1279.8,974.4 1290.1,976.1 1281.5,981.2 1271.2,970.9 1262.6,962.3 1250.6,957.2 1230.0,950.3" fill="#bccbe9" stroke="#4d5b78" stroke-width="0.8"/>
<polygon points="1280.0,938.8 1300.3,946.6 1295.6,948.1 1281.6,941.9" fill="#bccbe9" stroke="#4d5b78" stroke-width="0.8"/>
<polygon points="1303.4,948.1 1314.4,949.7 1312.8,951.2 1303.4,951.2" fill="#bccbe9" stroke="#4d5b78" stroke-width="0.8"/>
<polygon points="1291.9,976.1 1305.6,968.4 1329.7,972.6 1341.7,986.4 1350.3,988.1 1353.7,1001.9 1360.6,1005.3 1381.2,1008.7 1391.5,1017.3 1389.8,1029.3 1382.9,1039.7 1381.2,1056.8 1377.8,1062.0 1364.0,1070.6 1360.6,1080.9 1353.7,1091.2 1348.6,1096.4 1346.8,1101.5 1340.0,1106.7 1336.5,1111.8 1333.1,1120.4 1334.8,1132.4 1331.4,1142.7 1341.7,1149.6 1329.7,1149.6 1319.3,1142.7 1315.9,1129.0 1312.5,1111.8 1310.8,1086.0 1310.8,1051.7 1303.9,1046.5 1291.9,1036.2 1283.3,1015.6 1281.5,1001.9 1290.1,989.8" fill="#bccbe9" stroke="#4d5b78" stroke-width="0.8"/>
<polygon points="1355.4,796.8 1364.6,792.2 1378.3,789.9 1404.7,787.6 1425.3,787.0 1439.1,788.8 1455.1,791.0 1440.2,793.3 1439.1,804.8 1433.3,811.7 1421.9,818.5 1408.1,824.3 1399.0,830.0 1389.8,839.2 1379.5,833.4 1376.0,823.1 1378.3,809.4 1373.8,801.4 1360.0,799.1" fill="#bccbe9" stroke="#4d5b78" stroke-width="0.8"/>
<polygon points="1429.9,824.3 1437.9,823.1 1447.1,825.4 1444.8,830.0 1434.5,831.1 1431.0,827.7" fill="#bccbe9" stroke="#4d5b78" stroke-width="0.8"/>
<polygon points="1483.1,834.7 1488.7,828.1 1496.2,821.6 1505.6,815.9 1517.8,813.1 1524.4,813.1 1533.7,816.9 1545.9,820.6 1538.4,822.5 1536.6,825.3 1543.1,828.1 1548.7,823.4 1555.3,818.7 1560.0,817.8 1574.7,815.9 1595.8,810.9 1602.8,822.2 1604.2,810.9 1621.1,806.7 1620.0,802.5 1641.1,799.7 1662.2,802.5 1658.0,806.7 1687.5,807.4 1704.4,812.3 1718.5,809.5 1753.6,813.8 1774.7,815.9 1794.4,816.6 1811.3,832.7 1801.4,834.9 1800.0,839.1 1788.8,837.7 1797.2,851.7 1794.4,861.6 1781.7,847.5 1783.2,833.4 1774.7,836.3 1769.1,840.5 1749.4,841.9 1743.8,851.7 1755.0,855.9 1762.1,861.6 1763.5,875.6 1755.0,884.1 1743.8,889.7 1732.5,893.9 1739.5,899.5 1750.0,880.0 1740.0,887.5 1732.5,892.5 1742.5,905.0 1747.5,920.0 1742.5,932.5 1735.0,940.0 1727.5,945.0 1722.5,950.0 1728.8,967.5 1718.8,976.2 1713.8,967.5 1707.5,970.0 1710.0,977.5 1716.2,990.0 1717.5,997.5 1713.8,990.0 1703.8,973.8 1702.5,960.0 1697.5,955.0 1692.5,955.0 1685.0,938.8 1677.5,940.0 1661.2,957.5 1660.0,975.0 1653.8,977.5 1642.5,955.0 1637.5,943.8 1633.8,941.2 1630.0,933.8 1620.0,930.8 1613.8,931.6 1601.2,930.8 1610.6,940.2 1598.1,953.4 1595.0,958.1 1573.1,965.2 1574.7,966.7 1577.0,968.3 1592.7,968.3 1588.8,980.6 1573.1,1000.9 1566.9,1013.4 1566.9,1030.6 1554.4,1046.2 1552.8,1068.1 1545.0,1077.5 1532.5,1093.1 1515.3,1096.2 1507.5,1075.9 1501.2,1049.4 1501.2,1015.0 1493.4,991.6 1479.4,983.8 1454.4,988.4 1441.9,975.9 1433.3,965.0 1434.1,940.0 1434.1,941.7 1442.5,926.3 1450.9,915.0 1461.6,903.1 1454.1,899.4 1453.1,882.5 1464.4,881.6 1477.5,882.5 1470.9,880.6 1470.0,869.4 1464.4,869.4 1470.0,865.6 1477.5,863.7 1484.1,858.1 1486.9,852.5 1492.5,852.5 1492.5,846.9 1498.1,851.6 1503.7,854.4 1515.0,850.6 1520.6,845.0 1530.0,839.4 1522.5,838.4 1518.7,833.7 1518.7,827.2 1514.1,830.9 1511.2,837.5 1505.6,841.2 1504.7,846.9 1500.0,848.7 1496.2,841.2 1490.6,844.1 1484.1,842.2" fill="#bccbe9" stroke="#4d5b78" stroke-width="0.8"/>
<polygon points="1564.9,802.5 1586.0,800.4 1573.3,810.9 1563.5,812.3" fill="#bccbe9" stroke="#4d5b78" stroke-width="0.8"/>
<polygon points="1490.3,794.1 1504.4,792.7 1517.0,795.5 1504.4,798.3 1495.9,798.3" fill="#bccbe9" stroke="#4d5b78" stroke-width="0.8"/>
<polygon points="1704.4,802.5 1718.5,801.1 1726.9,803.9 1711.4,804.6" fill="#bccbe9" stroke="#4d5b78" stroke-width="0.8"/>
<polygon points="1620.0,791.3 1634.1,792.7 1643.9,796.2 1628.4,795.5" fill="#bccbe9" stroke="#4d5b78" stroke-width="0.8"/>
<polygon points="1453.1,882.5 1464.4,881.6 1477.5,882.5 1479.4,885.3 1473.7,892.8 1470.0,897.5 1461.6,902.2 1454.1,899.4" fill="#a2b6dc" stroke="#4d5b78" stroke-width="0.8"/>
<polygon points="1464.4,869.4 1470.0,865.6 1477.5,863.7 1484.1,858.1 1486.9,865.6 1490.6,871.2 1488.7,880.6 1479.4,882.5 1470.9,880.6 1470.0,869.4" fill="#a2b6dc" stroke="#4d5b78" stroke-width="0.8"/>
<polygon points="1486.9,852.5 1492.5,852.5 1496.2,854.4 1501.9,856.2 1502.8,863.7 1500.0,870.3 1490.6,871.2 1486.9,865.6 1485.9,858.1" fill="#7289c1" stroke="#4d5b78" stroke-width="0.8"/>
<polygon points="1462.5,844.1 1468.1,843.1 1470.9,851.6 1475.6,856.2 1475.6,860.9 1462.5,863.7 1466.2,856.2 1462.5,850.6" fill="#7289c1" stroke="#4d5b78" stroke-width="0.8"/>
<polygon points="1453.1,856.2 1456.9,851.6 1460.6,852.5 1458.7,860.0 1453.1,860.0" fill="#bccbe9" stroke="#4d5b78" stroke-width="0.8"/>
<polygon points="1653.8,867.2 1662.2,872.8 1680.5,879.9 1700.2,885.5 1711.4,881.3 1724.1,872.8 1719.9,858.8 1726.9,855.9 1752.2,871.4 1753.6,884.1 1739.5,892.5 1746.6,913.6 1748.0,924.9 1743.8,934.7 1732.5,940.3 1710.0,940.3 1694.5,920.6 1679.1,926.3 1653.8,917.8 1638.3,903.8 1636.9,892.5 1645.3,884.1" fill="#b0c1e3" stroke="#4d5b78" stroke-width="0.8"/>
<polygon points="1656.6,867.2 1676.3,861.6 1718.5,855.9 1724.1,872.8 1711.4,881.3 1700.2,885.5 1680.5,879.9 1662.2,872.8" fill="#eeeee9" stroke="#4d5b78" stroke-width="0.8"/>
<polygon points="1630.0,933.8 1637.5,943.8 1642.5,955.0 1653.8,977.5 1660.0,975.0 1661.2,957.5 1677.5,940.0 1675.0,930.0 1665.0,925.0 1655.0,920.0 1647.5,906.2 1637.5,905.0 1640.0,917.5 1631.2,927.5" fill="#a2b6dc" stroke="#4d5b78" stroke-width="0.8"/>
<polygon points="1660.0,975.0 1663.8,978.8 1665.0,983.8 1661.2,983.8" fill="#bccbe9" stroke="#4d5b78" stroke-width="0.8"/>
<polygon points="1581.7,893.3 1588.8,887.8 1598.1,888.6 1617.7,898.0 1612.2,903.4 1598.1,898.0 1585.6,897.2" fill="#eeeee9" stroke="#4d5b78" stroke-width="0.8"/>
<polygon points="1573.1,955.0 1595.0,948.8 1598.1,953.4 1595.0,958.1 1573.1,965.2" fill="#eeeee9" stroke="#4d5b78" stroke-width="0.8"/>
<polygon points="1530.2,914.4 1539.5,915.9 1551.2,915.2 1553.6,920.6 1563.8,939.4 1531.7,940.2" fill="#b3c4e5" stroke="#4d5b78" stroke-width="0.8"/>
<polygon points="1509.1,943.1 1527.8,946.2 1526.2,971.2 1510.6,979.1 1507.5,963.4" fill="#eeeee9" stroke="#4d5b78" stroke-width="0.8"/>
<polygon points="1532.5,975.9 1554.4,990.0 1548.1,991.6 1535.6,985.3" fill="#eeeee9" stroke="#4d5b78" stroke-width="0.8"/>
<polygon points="1495.0,997.8 1507.5,999.4 1507.5,1011.9 1498.1,1013.4" fill="#eeeee9" stroke="#4d5b78" stroke-width="0.8"/>
<polygon points="1526.2,1032.2 1541.9,1033.8 1554.4,1036.9 1555.9,1046.2 1538.8,1049.4 1526.2,1046.2" fill="#eeeee9" stroke="#4d5b78" stroke-width="0.8"/>
<polygon points="1573.1,958.8 1593.4,968.1 1588.8,980.6 1573.1,1000.9 1570.0,996.2 1582.5,975.9 1576.2,960.3" fill="#eeeee9" stroke="#4d5b78" stroke-width="0.8"/>
<polygon points="1573.1,1069.7 1576.2,1049.4 1588.8,1033.8 1590.3,1043.1 1577.8,1069.7" fill="#eeeee9" stroke="#4d5b78" stroke-width="0.8"/>
<polygon points="1437.2,968.1 1451.2,979.1 1452.8,986.9 1443.4,980.6" fill="#eeeee9" stroke="#4d5b78" stroke-width="0.8"/>
<polygon points="1461.6,902.7 1470.0,897.5 1473.7,892.8 1479.4,885.3 1488.7,880.6 1493.4,879.7 1498.1,886.2 1505.6,892.8 1511.2,890.0 1509.4,898.4 1500.9,898.0 1505.6,901.2 1515.0,899.4 1519.7,897.5 1522.5,901.2 1528.1,897.5 1530.0,893.7 1533.7,892.8 1543.1,899.4 1552.5,899.4 1551.6,912.5 1533.7,910.6 1519.7,912.5 1500.9,909.7 1497.2,901.2 1482.2,900.3 1470.9,901.2 1462.5,905.0" fill="#ffffff" stroke="#4d5b78" stroke-width="0.8"/>
<polygon points="1500.0,876.9 1503.7,878.7 1511.2,887.2 1514.1,890.0 1512.2,890.9 1505.6,884.4" fill="#ffffff" stroke="#4d5b78" stroke-width="0.8"/>
<polygon points="1524.4,889.1 1533.7,888.1 1531.9,893.7 1524.4,893.7" fill="#ffffff" stroke="#4d5b78" stroke-width="0.8"/>
<polygon points="1533.7,875.0 1543.1,871.2 1556.2,876.9 1560.0,883.4 1547.8,886.2 1534.7,887.2 1531.9,881.6" fill="#ffffff" stroke="#4d5b78" stroke-width="0.8"/>
<polygon points="1574.7,880.0 1580.9,880.0 1584.1,890.2 1581.7,892.5 1579.4,887.0" fill="#ffffff" stroke="#4d5b78" stroke-width="0.8"/>
<polygon points="1580.9,918.3 1584.8,919.1 1590.3,926.9 1599.7,929.2 1601.2,931.6 1598.9,937.8 1594.2,937.8 1588.8,931.6" fill="#ffffff" stroke="#4d5b78" stroke-width="0.8"/>
<polygon points="1550.5,921.4 1553.6,920.6 1563.8,939.4 1573.1,955.8 1574.7,964.4 1574.7,966.7 1570.0,962.8 1562.2,951.1 1556.7,937.8" fill="#ffffff" stroke="#4d5b78" stroke-width="0.8"/>
<polygon points="1777.5,889.7 1783.2,892.5 1784.6,903.8 1774.7,906.6 1766.3,915.0 1763.5,909.4 1771.9,903.8" fill="#bccbe9" stroke="#4d5b78" stroke-width="0.8"/>
<polygon points="1773.3,877.0 1783.2,881.3 1777.5,886.9 1773.3,884.1" fill="#bccbe9" stroke="#4d5b78" stroke-width="0.8"/>
<polygon points="1760.6,854.5 1763.5,855.9 1774.7,872.8 1771.9,873.5" fill="#bccbe9" stroke="#4d5b78" stroke-width="0.8"/>
<polygon points="1750.8,895.3 1756.4,895.3 1759.2,905.2 1753.6,906.6" fill="#bccbe9" stroke="#4d5b78" stroke-width="0.8"/>
<polygon points="1748.7,931.9 1751.5,932.6 1751.5,938.9 1749.1,938.9" fill="#bccbe9" stroke="#4d5b78" stroke-width="0.8"/>
<polygon points="1724.8,946.0 1729.7,946.7 1729.0,950.9 1725.5,950.2" fill="#bccbe9" stroke="#4d5b78" stroke-width="0.8"/>
<polygon points="1697.5,986.2 1707.5,992.5 1720.0,1010.0 1721.2,1015.0 1715.0,1010.0 1703.8,995.0" fill="#a2b6dc" stroke="#4d5b78" stroke-width="0.8"/>
<polygon points="1721.2,1017.5 1741.2,1022.5 1740.0,1025.0 1722.5,1020.0" fill="#a2b6dc" stroke="#4d5b78" stroke-width="0.8"/>
<polygon points="1730.0,997.5 1741.2,987.5 1747.5,982.5 1753.8,987.5 1751.2,1000.0 1746.2,1011.2 1735.0,1007.5" fill="#a2b6dc" stroke="#4d5b78" stroke-width="0.8"/>
<polygon points="1754.1,996.9 1766.6,996.9 1758.8,1004.7 1760.3,1012.5 1754.1,1010.9" fill="#a2b6dc" stroke="#4d5b78" stroke-width="0.8"/>
<polygon points="1752.5,950.0 1760.3,962.5 1763.4,970.3 1768.1,981.2 1761.9,981.2 1758.8,970.3" fill="#bccbe9" stroke="#4d5b78" stroke-width="0.8"/>
<polygon points="1783.8,1003.1 1796.2,1006.2 1805.6,1009.4 1818.1,1018.8 1825.9,1029.7 1804.1,1026.6 1796.2,1015.6 1786.9,1009.4" fill="#a2b6dc" stroke="#4d5b78" stroke-width="0.8"/>
<polygon points="1804.1,1009.4 1818.1,1018.8 1825.9,1029.7 1804.1,1026.6" fill="#bccbe9" stroke="#4d5b78" stroke-width="0.8"/>
<polygon points="1752.5,1025.0 1761.9,1023.4 1763.4,1026.6 1754.1,1028.1" fill="#a2b6dc" stroke="#4d5b78" stroke-width="0.8"/>
<polygon points="1765.0,1025.0 1771.2,1023.4 1766.6,1028.1" fill="#a2b6dc" stroke="#4d5b78" stroke-width="0.8"/>
<polygon points="1822.8,1015.6 1829.1,1009.4 1833.8,1012.5 1825.9,1017.2" fill="#bccbe9" stroke="#4d5b78" stroke-width="0.8"/>
<polygon points="1730.6,1093.8 1733.8,1062.5 1746.2,1056.2 1758.8,1046.9 1768.1,1039.1 1780.6,1032.8 1793.1,1035.2 1799.4,1046.9 1807.2,1031.2 1811.9,1050.0 1818.1,1059.4 1821.2,1071.9 1819.7,1082.8 1811.9,1092.2 1805.6,1100.0 1793.1,1106.2 1780.6,1104.7 1772.8,1092.2 1761.9,1087.5 1746.2,1090.6 1733.8,1096.9" fill="#7289c1" stroke="#4d5b78" stroke-width="0.8"/>
<polygon points="1785.3,1114.1 1793.1,1112.5 1790.0,1118.8 1785.3,1118.8" fill="#7289c1" stroke="#4d5b78" stroke-width="0.8"/>
<polygon points="1824.4,1126.6 1846.2,1114.1 1857.2,1104.7 1863.4,1103.1 1857.2,1096.9 1850.9,1109.4 1827.5,1123.4" fill="#bccbe9" stroke="#4d5b78" stroke-width="0.8"/>
<polyline points="1459.1,940.0 1459.1,958.8 1445.0,958.8" fill="none" stroke="#56627d" stroke-width="0.85"/>
<polyline points="1434.1,955.6 1445.0,958.8 1460.6,969.7 1473.1,961.9 1482.5,963.4 1505.9,963.4" fill="none" stroke="#56627d" stroke-width="0.85"/>
<polyline points="1482.5,947.8 1482.5,963.4" fill="none" stroke="#56627d" stroke-width="0.85"/>
<polyline points="1471.6,940.0 1482.5,947.8 1495.0,940.0" fill="none" stroke="#56627d" stroke-width="0.85"/>
<polyline points="1454.4,972.8 1454.4,988.4" fill="none" stroke="#56627d" stroke-width="0.85"/>
<polyline points="1466.9,971.2 1466.9,986.9" fill="none" stroke="#56627d" stroke-width="0.85"/>
<polyline points="1474.7,969.7 1474.7,985.3" fill="none" stroke="#56627d" stroke-width="0.85"/>
<polyline points="1479.4,963.4 1479.4,983.8" fill="none" stroke="#56627d" stroke-width="0.85"/>
<polyline points="1505.9,963.4 1507.5,979.1 1493.4,986.9 1495.0,994.7 1510.6,994.7 1516.9,986.9 1535.6,986.9 1545.0,990.0" fill="none" stroke="#56627d" stroke-width="0.85"/>
<polyline points="1527.8,940.0 1527.8,971.2 1554.4,974.4 1560.6,955.6" fill="none" stroke="#56627d" stroke-width="0.85"/>
<polyline points="1552.8,974.4 1551.2,990.0 1570.0,991.6" fill="none" stroke="#56627d" stroke-width="0.85"/>
<polyline points="1516.9,986.9 1510.6,1013.4 1526.2,1021.2 1526.2,1032.2" fill="none" stroke="#56627d" stroke-width="0.85"/>
<polyline points="1545.0,990.0 1545.0,1004.1 1554.4,1004.1 1566.9,1013.4" fill="none" stroke="#56627d" stroke-width="0.85"/>
<polyline points="1543.4,1004.1 1541.9,1024.4 1554.4,1033.8 1566.9,1030.6" fill="none" stroke="#56627d" stroke-width="0.85"/>
<polyline points="1502.8,1016.6 1513.8,1016.6 1521.6,1021.2 1526.2,1032.2" fill="none" stroke="#56627d" stroke-width="0.85"/>
<polyline points="1501.2,1047.8 1523.1,1049.4 1532.5,1049.4 1549.7,1046.2" fill="none" stroke="#56627d" stroke-width="0.85"/>
<polyline points="1521.6,1049.4 1520.0,1072.8 1507.5,1077.5" fill="none" stroke="#56627d" stroke-width="0.85"/>
<polyline points="1532.5,1049.4 1540.3,1061.9 1549.7,1058.8" fill="none" stroke="#56627d" stroke-width="0.85"/>
<polyline points="1538.8,1063.4 1545.0,1077.5" fill="none" stroke="#56627d" stroke-width="0.85"/>
<polyline points="1521.6,1072.8 1538.8,1063.4" fill="none" stroke="#56627d" stroke-width="0.85"/>
<polyline points="1469.2,905.2 1469.2,913.6 1453.8,926.3 1459.4,933.3 1481.9,948.8 1498.8,937.5 1494.5,915.0" fill="none" stroke="#56627d" stroke-width="0.85"/>
<polyline points="1494.5,913.6 1495.9,937.5 1529.7,940.3 1529.7,915.0" fill="none" stroke="#56627d" stroke-width="0.85"/>
<polyline points="1529.7,940.3 1553.6,940.3" fill="none" stroke="#56627d" stroke-width="0.85"/>
<polyline points="1434.1,941.7 1459.4,933.3" fill="none" stroke="#56627d" stroke-width="0.85"/>
<polyline points="1481.9,948.8 1481.9,960.0" fill="none" stroke="#56627d" stroke-width="0.85"/>
<polyline points="1458.0,933.3 1459.4,960.0" fill="none" stroke="#56627d" stroke-width="0.85"/>
<polyline points="1305.6,968.4 1302.2,974.4 1314.2,984.7 1315.9,998.4 1309.0,996.7 1302.2,1015.6 1309.0,1029.3 1327.9,1043.1 1333.1,1056.8 1346.8,1065.4 1350.3,1075.7 1343.4,1086.0 1352.0,1091.2" fill="none" stroke="#56627d" stroke-width="0.85"/>
<polyline points="1314.2,998.4 1329.7,991.5 1333.1,979.5 1343.4,991.5" fill="none" stroke="#56627d" stroke-width="0.85"/>
<polyline points="1281.5,1001.9 1297.0,1000.1 1307.3,1010.4" fill="none" stroke="#56627d" stroke-width="0.85"/>
<polyline points="1290.1,1007.0 1283.3,1015.6" fill="none" stroke="#56627d" stroke-width="0.85"/>
<polyline points="1302.2,1015.6 1309.0,1029.3 1312.5,1050.0 1317.6,1062.0 1326.2,1060.3 1333.1,1056.8" fill="none" stroke="#56627d" stroke-width="0.85"/>
<polyline points="1310.8,1051.7 1312.5,1094.6 1319.3,1142.7" fill="none" stroke="#56627d" stroke-width="0.85"/>
<polyline points="1329.7,1056.8 1331.4,1068.9 1343.4,1075.7" fill="none" stroke="#56627d" stroke-width="0.85"/>
<polyline points="1260.9,953.7 1262.6,962.3" fill="none" stroke="#56627d" stroke-width="0.85"/>
<polyline points="1273.0,952.0 1271.2,970.9" fill="none" stroke="#56627d" stroke-width="0.85"/>
<polyline points="1496.2,821.6 1498.1,830.0 1496.2,841.2" fill="none" stroke="#56627d" stroke-width="0.85"/>
<polyline points="1517.8,813.1 1515.0,823.4 1518.7,828.1" fill="none" stroke="#56627d" stroke-width="0.85"/>
<polyline points="1524.4,813.1 1530.0,830.9 1530.0,837.5" fill="none" stroke="#56627d" stroke-width="0.85"/>
<polyline points="1520.6,845.0 1528.1,846.9 1530.0,852.5 1522.5,852.5 1520.6,858.1" fill="none" stroke="#56627d" stroke-width="0.85"/>
<polyline points="1503.7,854.4 1501.9,856.2 1502.8,863.7 1520.6,865.6 1520.6,852.5" fill="none" stroke="#56627d" stroke-width="0.85"/>
<polyline points="1520.6,860.0 1539.4,860.0 1556.2,867.5 1552.5,875.0 1533.7,873.1 1522.5,869.4" fill="none" stroke="#56627d" stroke-width="0.85"/>
<polyline points="1500.0,865.6 1520.6,865.6" fill="none" stroke="#56627d" stroke-width="0.85"/>
<polyline points="1500.0,870.3 1520.6,871.2" fill="none" stroke="#56627d" stroke-width="0.85"/>
<polyline points="1507.5,863.7 1507.5,878.7" fill="none" stroke="#56627d" stroke-width="0.85"/>
<polyline points="1520.6,871.2 1533.7,873.1 1533.7,881.6 1522.5,882.5 1515.0,880.6" fill="none" stroke="#56627d" stroke-width="0.85"/>
<polyline points="1510.3,879.7 1522.5,889.1" fill="none" stroke="#56627d" stroke-width="0.85"/>
<polyline points="1488.7,873.1 1500.0,873.1" fill="none" stroke="#56627d" stroke-width="0.85"/>
<polyline points="1484.1,858.1 1486.9,860.0" fill="none" stroke="#56627d" stroke-width="0.85"/>
<polyline points="1530.0,837.5 1533.7,848.7 1539.4,860.0" fill="none" stroke="#56627d" stroke-width="0.85"/>
<polyline points="1532.5,864.4 1555.0,870.0 1567.7,878.5 1571.9,864.4 1588.8,855.9 1609.9,851.7 1640.0,858.8" fill="none" stroke="#56627d" stroke-width="0.85"/>
<polyline points="1573.3,878.5 1588.8,878.5 1615.5,886.9 1631.0,886.9 1640.0,884.1" fill="none" stroke="#56627d" stroke-width="0.85"/>
<polyline points="1620.0,854.5 1636.9,858.8 1653.8,867.2" fill="none" stroke="#56627d" stroke-width="0.85"/>
<polyline points="1563.8,898.8 1560.6,911.2 1574.7,919.1 1580.9,918.3" fill="none" stroke="#56627d" stroke-width="0.85"/>
<polyline points="1552.8,899.5 1555.2,919.1" fill="none" stroke="#56627d" stroke-width="0.85"/>
<polyline points="1574.7,905.8 1580.9,918.3 1590.3,926.9" fill="none" stroke="#56627d" stroke-width="0.85"/>
<polyline points="1608.3,901.9 1611.4,919.1 1620.0,920.6" fill="none" stroke="#56627d" stroke-width="0.85"/>
<polyline points="1608.3,901.9 1617.7,898.0" fill="none" stroke="#56627d" stroke-width="0.85"/>
<polyline points="1563.8,898.8 1574.7,905.8" fill="none" stroke="#56627d" stroke-width="0.85"/>
<polyline points="1563.8,940.2 1572.3,955.8" fill="none" stroke="#56627d" stroke-width="0.85"/>
<polyline points="1608.8,905.0 1612.5,920.0 1615.0,931.2" fill="none" stroke="#56627d" stroke-width="0.85"/>
<polyline points="1630.0,896.2 1640.0,917.5 1631.2,927.5 1630.0,933.8" fill="none" stroke="#56627d" stroke-width="0.85"/>
<polyline points="1685.0,938.8 1692.5,925.0 1685.0,920.0 1677.5,921.2" fill="none" stroke="#56627d" stroke-width="0.85"/>
<polyline points="1692.5,925.0 1700.0,938.8 1705.0,947.5 1715.0,955.0 1722.5,950.0" fill="none" stroke="#56627d" stroke-width="0.85"/>
<polyline points="1705.0,947.5 1710.0,940.0 1720.0,938.8" fill="none" stroke="#56627d" stroke-width="0.85"/></g>
<rect x="1168" y="1195" width="106.5" height="19" fill="#ececec"/>
<circle cx="1150.5" cy="1204" r="7" fill="none" stroke="#aaa" stroke-width="2"/><path d="M1147 1204 H1154 M1155.5 1209 L1160 1214" stroke="#aaa" stroke-width="2.2"/>
<circle cx="1177.5" cy="1205.5" r="9" fill="#444"/><path d="M1174 1199 C1177 1198 1181 1199 1181.5 1202 C1182 1205 1179 1206 1179 1209 C1179 1211 1177 1213 1176 1212 C1175 1209 1173 1207 1172.5 1204 C1172 1201 1172.5 1200 1174 1199 Z" fill="#ddd"/>
<text x="1193" y="1211.25" font-size="17.6" fill="#2160b0" font-weight="normal" text-anchor="start">Countries</text>
<rect x="1592" y="1194" width="125" height="31" fill="#fff" stroke="#ececec" stroke-width="1"/>
<text x="1603.4" y="1214.4" font-size="14.2" fill="#222" font-weight="normal" text-anchor="start">World-Wide</text>
<path d="M1697.5 1206 L1704 1212.5 L1710.5 1206" fill="none" stroke="#111" stroke-width="3"/>
<rect x="1726" y="1194" width="126.5" height="31" fill="#fff" stroke="#ececec" stroke-width="1"/>
<text x="1738" y="1214.4" font-size="14.2" fill="#222" font-weight="normal" text-anchor="start">Visits</text>
<path d="M1832 1206 L1838.5 1212.5 L1845 1206" fill="none" stroke="#111" stroke-width="3"/>
</svg>
<div class="badge" style="left:675.7px;top:176.5px">4</div>
<div class="badge" style="left:1509.8px;top:174.1px">5</div>
<div class="badge" style="left:671.1px;top:582px">6</div>
<div class="badge" style="left:1509.8px;top:686px">7</div>
</body></html>
